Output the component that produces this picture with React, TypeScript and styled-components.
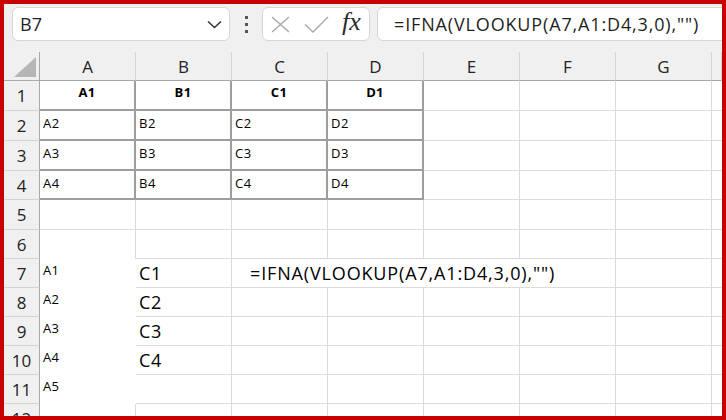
import styled, { createGlobalStyle } from "styled-components";

type Edge = "thin" | "thick" | "none";
type Kind = "bold" | "body" | "note" | "large" | "formula" | "empty";

const GlobalStyle = createGlobalStyle`
  html, body {
    margin: 0;
    padding: 0;
    background: #fff;
  }
  body {
    font-family: "Open Sans", "Noto Sans", sans-serif;
    color: #000;
  }
`;

const Frame = styled.div`
  width: 726px;
  height: 420px;
  box-sizing: border-box;
  border: 4px solid #c80000;
  background: #f0f0f0;
  overflow: hidden;
  display: flex;
  flex-direction: column;
`;

const FormulaBar = styled.div`
  height: 48px;
  flex: none;
  box-sizing: border-box;
  padding: 3px 0 0 8px;
  display: flex;
  align-items: flex-start;
`;

const Box = styled.div`
  height: 34px;
  box-sizing: border-box;
  background: #fff;
  border: 1px solid #d6d6d6;
  border-radius: 6px;
  display: flex;
  align-items: center;
`;

const NameBox = styled(Box)`
  width: 218px;
  flex: none;
  padding: 0 7px;
  justify-content: space-between;
  font-size: 18px;
  line-height: 1;
  color: #1f1f1f;
`;

const MoreDots = styled.div`
  width: 32px;
  height: 34px;
  flex: none;
  display: flex;
  flex-direction: column;
  align-items: center;
  justify-content: center;
  gap: 4px;
  span {
    width: 3px;
    height: 3px;
    background: #555;
  }
`;

const FunctionBox = styled(Box)`
  width: 108px;
  flex: none;
  padding: 0 0 0 8px;
  gap: 14px;
`;

const Fx = styled.span`
  font-family: "Liberation Serif", "DejaVu Serif", serif;
  font-style: italic;
  font-size: 26px;
  line-height: 1;
  color: #2b2b2b;
  margin: -4px 0 0 -1px;
`;

const FormulaBox = styled(Box)`
  flex: 1;
  margin: 0 -8px 0 7px;
  padding: 0 0 0 16px;
  font-size: 18px;
  letter-spacing: 0.85px;
  line-height: 1;
  color: #1f1f1f;
  white-space: nowrap;
`;

const Sheet = styled.div`
  flex: 1;
  display: grid;
  grid-template-columns: 36px repeat(7, 96px) 10px;
  grid-template-rows: 29px 30px 30px 30px 29px 30px 29px repeat(6, 29px);
`;

const Corner = styled.div`
  box-sizing: border-box;
  border-right: 1px solid #a8a8a8;
  border-bottom: 1px solid #a8a8a8;
  display: flex;
  align-items: flex-end;
  justify-content: flex-end;
  padding: 0 3px 3px 0;
`;

const ColHead = styled.div`
  box-sizing: border-box;
  border-right: 1px solid #d4d4d4;
  border-bottom: 1px solid #a8a8a8;
  display: flex;
  align-items: center;
  justify-content: center;
  font-size: 17px;
  line-height: 1;
  color: #222;
`;

const RowHead = styled.div`
  box-sizing: border-box;
  border-right: 1px solid #a8a8a8;
  border-bottom: 1px solid #d4d4d4;
  display: flex;
  align-items: center;
  justify-content: center;
  font-size: 17px;
  line-height: 1;
  color: #222;
`;

const edge = (e: Edge) =>
  e === "thick" ? "2px solid #9e9e9e" : e === "thin" ? "1px solid #dcdcdc" : "none";

const kinds: Record<Kind, string> = {
  bold: "font-size: 13px; font-weight: 700; letter-spacing: 0.3px; text-align: center; padding: 5px 3px 0;",
  body: "font-size: 13px; letter-spacing: 0.6px; padding: 6px 3px 0;",
  note: "font-size: 13px; letter-spacing: 0.4px; padding: 5px 3px 0;",
  large: "font-size: 18px; letter-spacing: 0.6px; padding: 5px 3px 0;",
  formula: "font-size: 18px; letter-spacing: 0.85px; padding: 5px 3px 0 18px;",
  empty: "",
};

const Cell = styled.div<{ $right: Edge; $bottom: Edge; $kind: Kind; $span: number }>`
  grid-column: span ${(p) => p.$span};
  box-sizing: border-box;
  background: #fff;
  border-right: ${(p) => edge(p.$right)};
  border-bottom: ${(p) => edge(p.$bottom)};
  line-height: 1;
  white-space: nowrap;
  overflow: hidden;
  ${(p) => kinds[p.$kind]}
`;

type CellData = { text?: string; kind?: Kind; right?: Edge; bottom?: Edge; span?: number };

const cols = ["A", "B", "C", "D", "E", "F", "G", "H"];

const buildRow = (r: number): CellData[] => {
  const row: CellData[] = [];
  if (r <= 4) {
    ["A", "B", "C", "D"].forEach((c) =>
      row.push({
        text: `${c}${r}`,
        kind: r === 1 ? "bold" : "body",
        right: "thick",
        bottom: "thick",
      })
    );
    row.push({}, {}, {});
  } else if (r === 6) {
    row.push({ bottom: "none" }, {}, {}, {}, {}, {}, {});
  } else if (r >= 7 && r <= 11) {
    row.push({ text: `A${r - 6}`, kind: "note", right: "none", bottom: "none" });
    if (r === 7) {
      row.push({ text: "C1", kind: "large" });
      row.push({ text: '=IFNA(VLOOKUP(A7,A1:D4,3,0),"")', kind: "formula", span: 4 });
      row.push({});
    } else if (r <= 10) {
      row.push({ text: `C${r - 6}`, kind: "large" }, {}, {}, {}, {}, {});
    } else {
      row.push({}, {}, {}, {}, {}, {});
    }
  } else {
    row.push({}, {}, {}, {}, {}, {}, {});
  }
  row.push({ right: "none" });
  return row;
};

const rows = Array.from({ length: 12 }, (_, i) => i + 1);

const ChevronIcon = () => (
  <svg width="15" height="9" viewBox="0 0 15 9">
    <path d="M1 1.5 L7.5 7.5 L14 1.5" fill="none" stroke="#333" strokeWidth="1.5" />
  </svg>
);

const CancelIcon = () => (
  <svg width="19" height="17" viewBox="0 0 19 17">
    <path d="M1 1 L18 16 M18 1 L1 16" fill="none" stroke="#a9a9a9" strokeWidth="1.4" />
  </svg>
);

const EnterIcon = () => (
  <svg width="25" height="17" viewBox="0 0 25 17">
    <path d="M1 8.5 L9 16 L24 1" fill="none" stroke="#a9a9a9" strokeWidth="1.4" />
  </svg>
);

const SelectAll = () => (
  <svg width="22" height="20" viewBox="0 0 22 20">
    <polygon points="22,0 22,20 0,20" fill="#b6b6b6" />
  </svg>
);

const App = () => {
  return (
    <>
      <GlobalStyle />
      <Frame>
        <FormulaBar>
          <NameBox>
            <span>B7</span>
            <ChevronIcon />
          </NameBox>
          <MoreDots>
            <span />
            <span />
            <span />
          </MoreDots>
          <FunctionBox>
            <CancelIcon />
            <EnterIcon />
            <Fx>fx</Fx>
          </FunctionBox>
          <FormulaBox>=IFNA(VLOOKUP(A7,A1:D4,3,0),"")</FormulaBox>
        </FormulaBar>
        <Sheet>
          <Corner>
            <SelectAll />
          </Corner>
          {cols.map((c) => (
            <ColHead key={c}>{c === "H" ? "" : c}</ColHead>
          ))}
          {rows.map((r) => [
            <RowHead key={`h${r}`}>{r}</RowHead>,
            ...buildRow(r).map((cell, i) => (
              <Cell
                key={`${r}-${i}`}
                $right={cell.right ?? "thin"}
                $bottom={cell.bottom ?? "thin"}
                $kind={cell.kind ?? "empty"}
                $span={cell.span ?? 1}
              >
                {cell.text}
              </Cell>
            )),
          ])}
        </Sheet>
      </Frame>
    </>
  );
};

export default App;
